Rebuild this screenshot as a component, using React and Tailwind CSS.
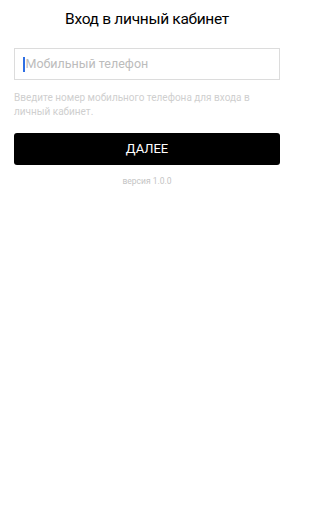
export default function App() {
  return (
    <div className="min-h-[512px] w-[295px] bg-white px-[14px] pr-[15px] font-['Roboto',sans-serif]">
      <h1 className="pt-[10px] text-center text-[15.5px] leading-[18px] tracking-[-0.3px] text-black">
        Вход в личный кабинет
      </h1>

      <div className="mt-[20px] flex h-[32px] items-center border border-[#dcdcdc] px-[8px]">
        <span className="mr-[1px] h-[15px] w-[1.5px] bg-[#2f6fe4]" />
        <span className="text-[12.5px] text-[#bcbcbc]">Мобильный телефон</span>
      </div>

      <p className="mt-[11px] text-[10px] leading-[14px] text-[#cfcfcf]">
        Введите номер мобильного телефона для входа в личный кабинет.
      </p>

      <button className="mt-[14px] flex h-[32px] w-full items-center justify-center rounded-[3px] bg-black text-[13px] text-white">
        ДАЛЕЕ
      </button>

      <p className="mt-[10px] text-center text-[8.5px] leading-[12px] text-[#c4c4c4]">
        версия 1.0.0
      </p>
    </div>
  );
}
